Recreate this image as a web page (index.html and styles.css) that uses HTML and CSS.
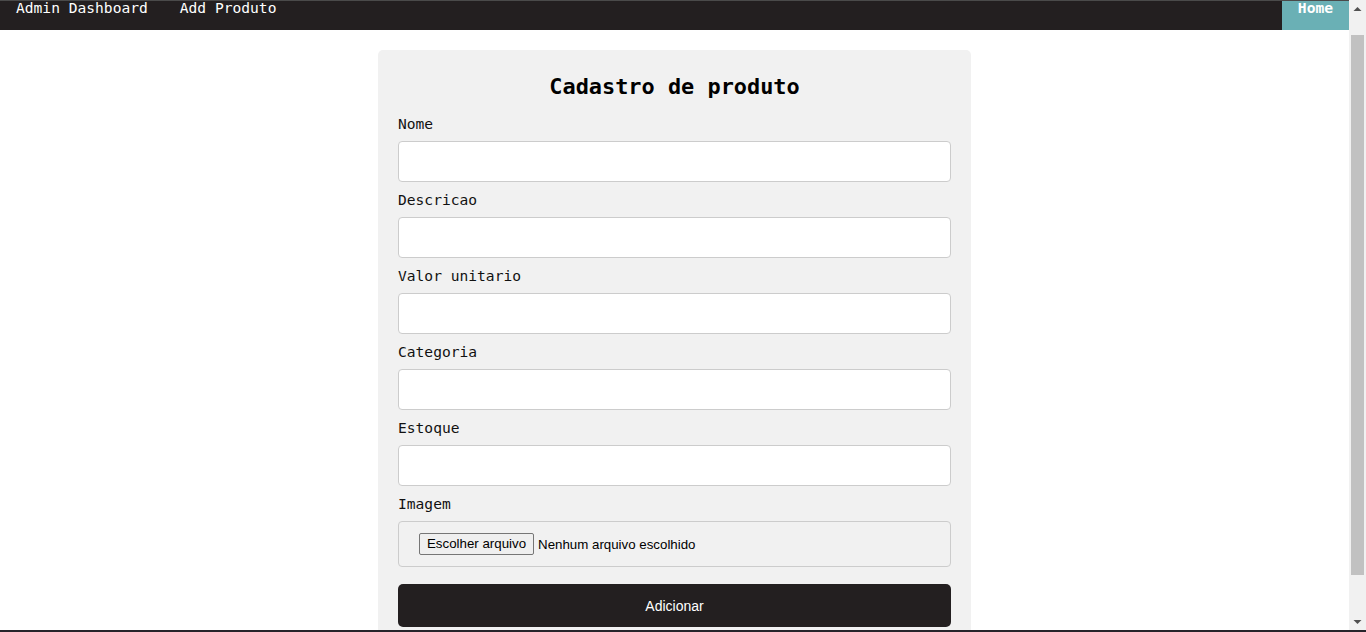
FILE: index.html
```html
<!DOCTYPE html>
<html lang="pt">
<head>
<meta charset="utf-8">
<title>Cadastro de produto</title>
<link rel="stylesheet" href="styles.css">
</head>
<body>
<div class="page">
  <div class="main">
    <nav class="navbar">
      <div class="nav-left">
        <a class="nav-link" href="#">Admin Dashboard</a>
        <a class="nav-link" href="#">Add Produto</a>
      </div>
      <a class="nav-link nav-home" href="#">Home</a>
    </nav>
    <div class="content">
      <form class="card">
        <h2 class="title">Cadastro de produto</h2>
        <label class="label">Nome</label>
        <input class="field" type="text">
        <label class="label">Descricao</label>
        <input class="field" type="text">
        <label class="label">Valor unitario</label>
        <input class="field" type="text">
        <label class="label">Categoria</label>
        <input class="field" type="text">
        <label class="label">Estoque</label>
        <input class="field" type="text">
        <label class="label">Imagem</label>
        <div class="file-box">
          <span class="file-btn">Escolher arquivo</span>
          <span class="file-name">Nenhum arquivo escolhido</span>
        </div>
        <button class="submit" type="button">Adicionar</button>
      </form>
    </div>
  </div>
  <div class="scrollbar">
    <svg class="arrow" width="17" height="17" viewBox="0 0 17 17"><path d="M4.5 11 L12.5 11 L8.5 7 Z" fill="#505050"/></svg>
    <div class="track"><div class="thumb"></div></div>
    <svg class="arrow" width="17" height="17" viewBox="0 0 17 17"><path d="M4.5 7 L12.5 7 L8.5 11 Z" fill="#505050"/></svg>
  </div>
</div>
<div class="bottom-edge"></div>
</body>
</html>
```
FILE: styles.css
```css
* { box-sizing: border-box; }
html, body { margin: 0; padding: 0; height: 100%; overflow: hidden; background: #fff; }
body { display: flex; flex-direction: column; }
.page { display: flex; flex: 1; min-height: 0; }
.main { flex: 1; display: flex; flex-direction: column; min-width: 0; overflow: hidden; }

.navbar {
  height: 30px;
  flex: none;
  background: #231f20;
  border-top: 1px solid #4a4a4a;
  display: flex;
  justify-content: space-between;
  align-items: flex-start;
}
.nav-left { display: flex; }
.nav-link {
  display: block;
  color: #fff;
  text-decoration: none;
  font-family: "DejaVu Sans Mono", monospace;
  font-size: 14.6px;
  line-height: 14px;
  padding: 0 16px;
  height: 29px;
}
.nav-home { background: #6ab0b5; font-weight: bold; }

.content { flex: 1; display: flex; justify-content: center; padding-top: 20px; }
.card {
  width: 593px;
  background: #f1f1f1;
  border-radius: 5px;
  padding: 20px;
  display: flex;
  flex-direction: column;
  align-self: flex-start;
}
.title {
  margin: 0 0 10px;
  text-align: center;
  font-family: "DejaVu Sans Mono", monospace;
  font-weight: bold;
  font-size: 21.9px;
  line-height: 34px;
  color: #000;
}
.label {
  font-family: "DejaVu Sans Mono", monospace;
  font-size: 14.6px;
  line-height: 19px;
  color: #111;
  margin-bottom: 8px;
}
.field {
  height: 41px;
  border: 1px solid #ccc;
  border-radius: 4px;
  background: #fff;
  margin: 0 0 8px;
  width: 100%;
}
.file-box {
  height: 46px;
  border: 1px solid #ccc;
  border-radius: 4px;
  display: flex;
  align-items: center;
  padding: 0 20px;
  gap: 4px;
  font-family: "Liberation Sans", Arial, sans-serif;
  font-size: 13.3px;
  color: #000;
}
.file-btn {
  border: 1px solid #767676;
  border-radius: 2px;
  background: #efefef;
  padding: 2px 7px;
  line-height: 16px;
}
.submit {
  margin-top: 17px;
  height: 43px;
  border: none;
  border-radius: 5px;
  background: #231f20;
  color: #fff;
  font-family: "Liberation Sans", Arial, sans-serif;
  font-size: 14px;
  font-weight: 500;
  width: 100%;
}

.scrollbar {
  width: 17px;
  flex: none;
  background: #f1f1f1;
  display: flex;
  flex-direction: column;
}
.arrow { display: block; flex: none; }
.track { flex: 1; padding: 18px 2px 38px; display: flex; }
.thumb { flex: 1; background: #c1c1c1; }
.bottom-edge { height: 2px; flex: none; background: #26232a; }
```
